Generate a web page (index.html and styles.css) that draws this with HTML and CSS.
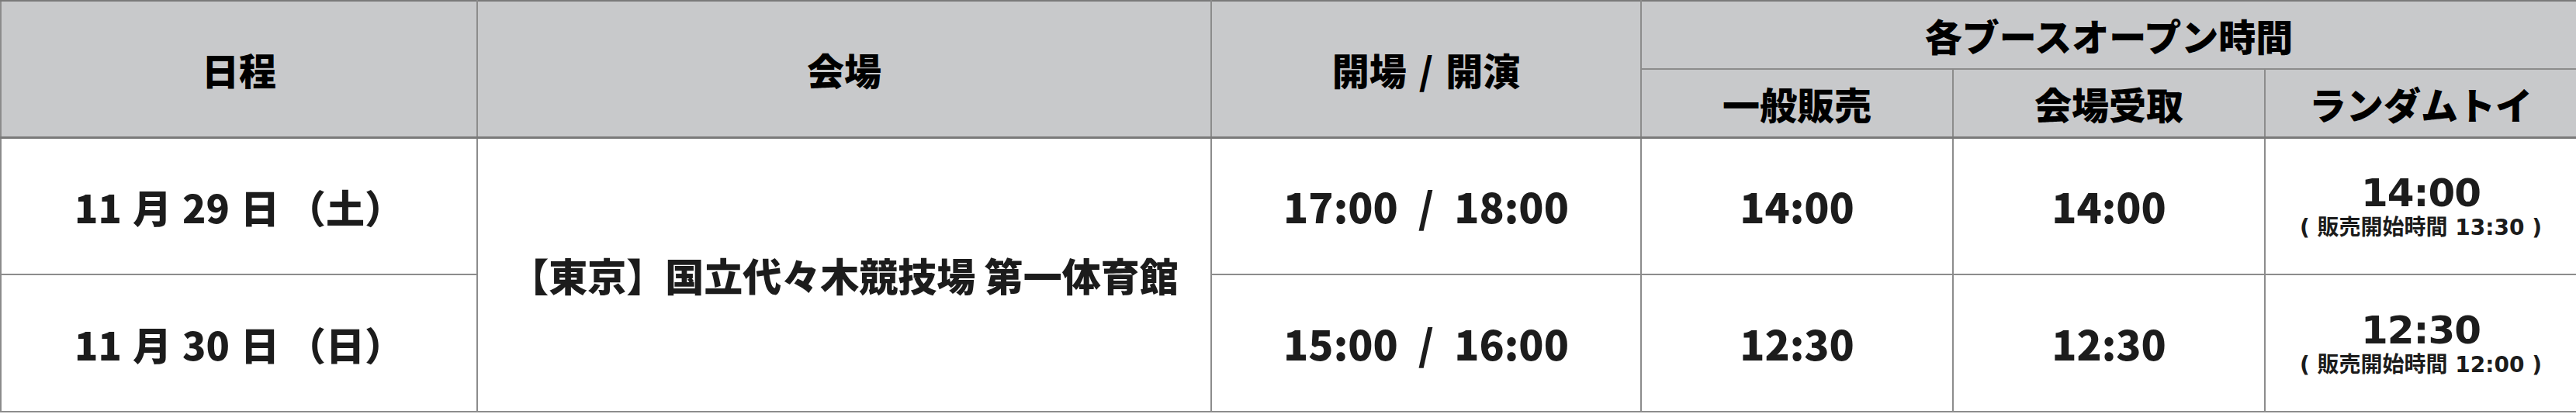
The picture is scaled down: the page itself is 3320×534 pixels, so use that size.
FILE: index.html
```html
<!DOCTYPE html>
<html lang="ja">
<head>
<meta charset="utf-8">
<title>スケジュール</title>
<link rel="stylesheet" href="styles.css">
</head>
<body>
<table class="sched">
  <colgroup>
    <col class="c-date">
    <col class="c-venue">
    <col class="c-open">
    <col class="c-booth">
    <col class="c-booth">
    <col class="c-booth">
  </colgroup>
  <thead>
    <tr class="h1">
      <th rowspan="2">日程</th>
      <th rowspan="2">会場</th>
      <th rowspan="2">開場<span class="hslash">/</span>開演</th>
      <th colspan="3" class="sub-top">各ブースオープン時間</th>
    </tr>
    <tr class="h2">
      <th>一般販売</th>
      <th>会場受取</th>
      <th>ランダムトイ</th>
    </tr>
  </thead>
  <tbody>
    <tr class="r">
      <td class="date">11<span class="sp">月</span>29<span class="sp">日</span><span class="paren">（土）</span></td>
      <td rowspan="2" class="venue">【東京】国立代々木競技場 第一体育館</td>
      <td class="time">17:00<span class="slash">/</span>18:00</td>
      <td class="time">14:00</td>
      <td class="time">14:00</td>
      <td class="toy"><div class="toy-main">14:00</div><div class="toy-sub">( 販売開始時間 13:30 )</div></td>
    </tr>
    <tr class="r">
      <td class="date">11<span class="sp">月</span>30<span class="sp">日</span><span class="paren">（日）</span></td>
      <td class="time">15:00<span class="slash">/</span>16:00</td>
      <td class="time">12:30</td>
      <td class="time">12:30</td>
      <td class="toy"><div class="toy-main">12:30</div><div class="toy-sub">( 販売開始時間 12:00 )</div></td>
    </tr>
  </tbody>
</table>
</body>
</html>
```

FILE: styles.css
```css
html, body {
  margin: 0;
  padding: 0;
  background: #ffffff;
}

.sched {
  width: 3320px;
  table-layout: fixed;
  border-collapse: collapse;
  font-family: "Noto Sans CJK JP", "Noto Sans", sans-serif;
  font-weight: 900;
  color: #1c1c1c;
}

.c-date { width: 614px; }
.c-venue { width: 946px; }
.c-open { width: 554px; }
.c-booth { width: 402px; }

.sched th,
.sched td {
  border: 2px solid #8c8c8c;
  padding: 0;
  text-align: center;
  vertical-align: middle;
}

.sched th {
  background: #c8c9cb;
  color: #000000;
  font-size: 48px;
  line-height: 1;
  font-weight: 900;
}

.hslash {
  margin: 0 16px;
}

.h1 { height: 88px; }
.h2 { height: 88px; }

.h2 th,
.h1 th[rowspan] {
  border-bottom: 3px solid #7a7a7a;
}

.sched thead tr:first-child th {
  border-top: 2px solid #7a7a7a;
}

.r { height: 177px; }

.date {
  font-size: 50px;
  line-height: 1;
  padding-left: 8px;
}

.date .sp {
  margin: 0 14px;
}

.date .paren {
  margin-left: -4px;
}

.venue {
  font-size: 50px;
  line-height: 1;
}

.time {
  font-size: 53px;
  line-height: 1;
}

.time .slash {
  margin: 0 26px;
}

.toy {
  font-family: "DejaVu Sans", "Noto Sans CJK JP", sans-serif;
  font-weight: 700;
}

.toy-main {
  font-size: 50px;
  line-height: 1;
  letter-spacing: -1px;
}

.toy-sub {
  margin-top: 6px;
  font-size: 28px;
  line-height: 1;
}
```
